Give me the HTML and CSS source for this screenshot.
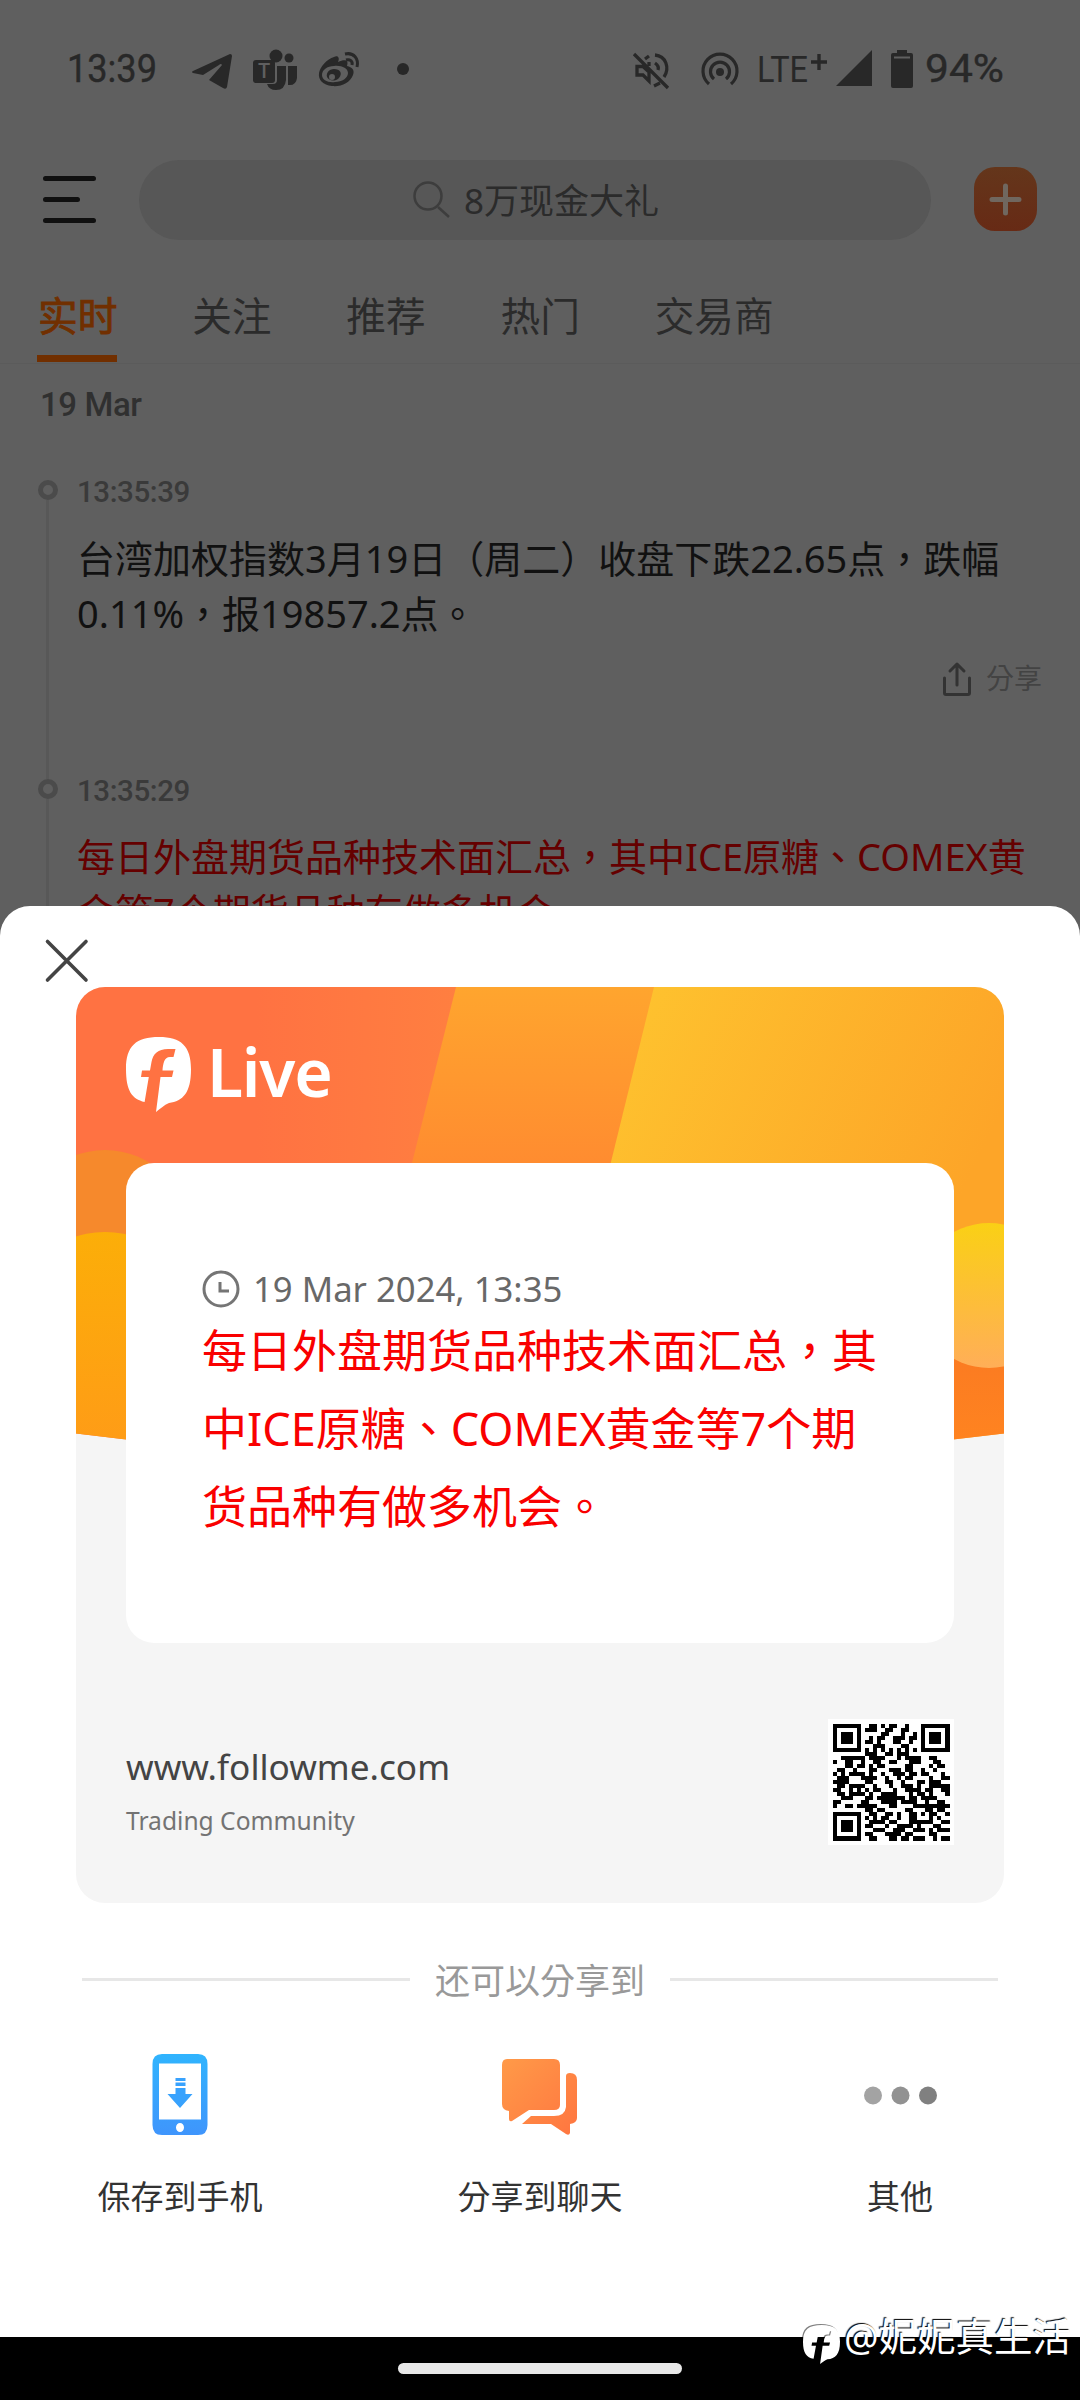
FILE: index.html
```html
<!DOCTYPE html>
<html lang="zh-Hant-TW">
<head>
<meta charset="utf-8">
<title>Followme</title>
<link rel="stylesheet" href="styles.css">
</head>
<body>
<div class="screen">
  <main class="app">
    <div class="status">
      <svg class="st-time" width="92" height="40" viewBox="0 0 92 40"><text x="1" y="34" textLength="90" lengthAdjust="spacingAndGlyphs">13:39</text></svg>
      <svg class="st-tg" width="42" height="40" viewBox="0 0 42 40"><path d="M2 20 39 3Q41 3 41 5L36 36Q35 39 32 37L18 29 31 14Q30 12 28 14L12 24 2 22Q0 21 2 20Z"/></svg>
      <svg class="st-teams" width="44" height="42" viewBox="0 0 44 42"><circle cx="23" cy="7" r="6.500"/><circle cx="36" cy="9" r="4.500"/><path d="M24 17H33V31Q32 41 23 41 16 41 14 35H20Q24 35 24 31ZM35 17H44V29Q43 37 35 36Z"/><rect y="11" width="22" height="23" rx="3"/><text class="st-t" x="11" y="29" text-anchor="middle">T</text></svg>
      <svg class="st-weibo" width="42" height="36" viewBox="0 0 42 36"><path fill-rule="evenodd" d="M16 5C20 3 22 6 20 10 27 7 31 8 29 14 34 15 37 18 35 23 32 31 23 35 14 34 5 33 0 28 1 21 2 15 9 7 16 5ZM16 14C9 14 4 18 4 23 4 28 10 31 17 30 24 30 30 26 30 21 30 16 23 13 16 14Z"/><path fill-rule="evenodd" d="M16 17C11 17 8 21 9 25 11 29 17 30 21 26 25 21 22 17 16 17ZM14 22A3 3 0 1 1 14 28 3 3 0 0 1 14 22Z"/><path class="line" d="M27 2C36 0 41 7 39 15M28 8C32 7 35 9 34 13" stroke-width="3"/></svg>
      <span class="st-dot"></span>
      <svg class="st-mute" width="38" height="38" viewBox="0 0 38 38"><path class="line" d="M2 2 36 36M5 14.500H11L17 20V29L11 23H5ZM23 3C34 4 38 16 32 25M23 11C26 13 27 15 26 18M22 34 28 31M17 4 13 7M17 10V14" stroke-width="3.300"/></svg>
      <svg class="st-spot" width="38" height="34" viewBox="0 0 38 34"><circle cx="19" cy="20" r="4"/><path class="line" d="M8 32A17 17 0 1 1 30 32M13 27A9.500 9.500 0 1 1 25 27" stroke-width="3.200"/></svg>
      <svg class="st-lte" width="70" height="40" viewBox="0 0 70 40"><text x="-2" y="35" textLength="51" lengthAdjust="spacingAndGlyphs">LTE</text><path class="line" d="M52 15H68M60 7V23" stroke-width="3.400"/></svg>
      <svg class="st-sig" width="36" height="36" viewBox="0 0 36 36"><path d="M36 0V36H0Z"/></svg>
      <svg class="st-bat" width="24" height="40" viewBox="0 0 24 40"><path d="M7 1H17V4H21Q23 4 23 6V37Q23 39 21 39H3Q1 39 1 37V6Q1 4 3 4H7Z"/><path class="gap" d="M4 8.500H20"/></svg>
      <svg class="st-pct" width="80" height="40" viewBox="0 0 80 40"><text x="-1" y="34" textLength="79" lengthAdjust="spacingAndGlyphs">94%</text></svg>
    </div>

    <header class="top">
      <svg class="menu" width="53" height="50" viewBox="0 0 53 50"><path d="M2.500 4.500H50.500M2.500 25.500H34.500M2.500 46.500H50.500"/></svg>
      <div class="search">
        <svg width="38" height="38" viewBox="0 0 38 38"><circle cx="15" cy="15" r="13.500"/><path d="M25 26 36 36"/></svg>
        <span>8万现金大礼</span>
      </div>
      <div class="add"><svg width="31" height="31" viewBox="0 0 31 31"><path d="M2 15.500H29M15.500 2V29"/></svg></div>
    </header>

    <nav class="tabs">
      <span class="tab active">实时</span><span class="tab">关注</span><span class="tab">推荐</span><span class="tab">热门</span><span class="tab">交易商</span>
    </nav>

    <div class="date">19 Mar</div>
    <article class="item">
      <time>13:35:39</time>
      <p>台湾加权指数3月19日（周二）收盘下跌22.65点，跌幅<br>0.11%，报19857.2点。</p>
      <div class="share">
        <svg width="30" height="36" viewBox="0 0 30 36"><path d="M2.500 17V32Q2.500 33.500 4 33.500H26Q27.500 33.500 27.500 32V17M15 24V3M8 10 15 3 22 10"/></svg>
        <span>分享</span>
      </div>
    </article>
    <article class="item hot">
      <time>13:35:29</time>
      <p>每日外盘期货品种技术面汇总，其中ICE原糖、COMEX黄<br>金等7个期货品种有做多机会。</p>
    </article>
  </main>

  <section class="sheet">
    <div class="close"><svg width="44" height="44" viewBox="0 0 44 44"><path d="M2.500 2.500 41 41M41 2.500 2.500 41"/></svg></div>
    <div class="card">
      <svg class="banner" width="928" height="460" viewBox="0 0 928 460">
        <defs>
          <clipPath id="arc"><path d="M0 0H928V446.500Q464 505 0 446.500Z"/></clipPath>
          <linearGradient id="gA"><stop offset=".45" stop-color="#ff7242"/><stop offset="1" stop-color="#ff8040"/></linearGradient>
          <linearGradient id="gB" x2="0" y2="1"><stop offset="0" stop-color="#ffa52e"/><stop offset=".38" stop-color="#ff8b30"/><stop offset="1" stop-color="#ff8b30"/></linearGradient>
          <linearGradient id="gC" x2="1" y2=".5"><stop offset="0.1" stop-color="#fec52f"/><stop offset=".9" stop-color="#fda528"/></linearGradient>
          <linearGradient id="gD" x2="0" y2="1"><stop offset="0" stop-color="#fcae08"/><stop offset="1" stop-color="#ff9a18"/></linearGradient>
          <linearGradient id="gE" x2="0" y2="1"><stop offset="0" stop-color="#fad015"/><stop offset="1" stop-color="#ffae58"/></linearGradient>
          <linearGradient id="gF" x2="0" y2="1"><stop offset="0" stop-color="#f97522"/><stop offset="1" stop-color="#ff8420"/></linearGradient>
        </defs>
        <g clip-path="url(#arc)">
          <rect width="400" height="480" fill="url(#gA)"/>
          <path d="M380 0H600V480H260Z" fill="url(#gB)"/>
          <path d="M578 0H928V480H460Z" fill="url(#gC)"/>
          <circle cx="29" cy="248" r="85" fill="#f6892c"/>
          <path d="M-66 340A95 95 0 0 1 124 340V480H-66Z" fill="url(#gD)"/>
          <path d="M840 310H928V460H840Z" fill="url(#gF)"/>
          <circle cx="913" cy="308.500" r="72.500" fill="url(#gE)"/>
        </g>
      </svg>
      <div class="brand">
        <svg width="65" height="75" viewBox="0 0 65 75"><path id="mark" d="M18.600 65C6 62 0 54 0 32 0 9 10 0 33 0 55 0 65 9 65 32 65 56 57 64 43 66 38 68 34 72 30 75L34.500 40H46L47.500 33.600H36.500C37 27 38 20 44 20H47.500L49.500 12H42C32 12 27 17 25.500 25L24 33.600H16L15 40H22.800Z"/></svg>
        <span>Live</span>
      </div>
      <div class="note">
        <div class="when">
          <svg width="38" height="38" viewBox="0 0 38 38"><circle cx="19" cy="19" r="17"/><path d="M18 12V21H27"/></svg>
          <span>19 Mar 2024, 13:35</span>
        </div>
        <p>每日外盘期货品种技术面汇总，其<br>中ICE原糖、COMEX黄金等7个期<br>货品种有做多机会。</p>
      </div>
      <div class="foot">
        <div>
          <div class="url">www.followme.com</div>
          <div class="tag">Trading Community</div>
        </div>
        <svg class="qr" viewBox="0 0 29 29" shape-rendering="crispEdges"></svg>
      </div>
    </div>

    <div class="divider"><span>还可以分享到</span></div>
    <div class="actions">
      <div class="action">
        <div class="icon"><svg width="56" height="82" viewBox="0 0 56 82"><defs><linearGradient id="gP" x2="0" y2="1"><stop offset="0" stop-color="#30b4fe"/><stop offset="1" stop-color="#3f95fc"/></linearGradient></defs><path fill="url(#gP)" fill-rule="evenodd" d="M10 0H46Q55.500 0 55.500 10V71Q55.500 81 46 81H10Q.5 81 .5 71V10Q.5 0 10 0ZM7 9.500V65.500H49V9.500ZM28 69A4 4.500 0 0 0 28 78 4 4.500 0 0 0 28 69Z"/><path fill="#38a2fd" d="M23.500 24H33.500V27H23.500ZM23.500 28.500H33.500V32H23.500ZM23.500 34H33.500V40H40.500L28 54 15.500 40H23.500Z"/></svg></div>
        <span>保存到手机</span>
      </div>
      <div class="action">
        <div class="icon"><svg width="80" height="82" viewBox="0 0 80 82"><defs><linearGradient id="gM" x2="1" y2="1"><stop offset="0" stop-color="#ff9a48"/><stop offset="1" stop-color="#ff7540"/></linearGradient></defs><path fill="url(#gM)" d="M7 5H54Q60 5 60 11V51Q60 56 54 56H29L12 67Q9 68 9 65V57Q2 56 2 50V11Q2 5 7 5ZM66 22Q66 19 70 19 77 19 77 26V64Q77 69 70 70V79Q69 82 66 80L51 70H22L31 62H54Q65 62 66 53Z"/></svg></div>
        <span>分享到聊天</span>
      </div>
      <div class="action">
        <div class="icon"><svg width="74" height="82" viewBox="0 0 74 82"><circle cx="10" cy="41.500" r="9" fill="#a3a3a3"/><circle cx="37.500" cy="41.500" r="9" fill="#929292"/><circle cx="65" cy="41.500" r="9" fill="#808080"/></svg></div>
        <span>其他</span>
      </div>
    </div>
  </section>

  <footer class="navbar"><span></span></footer>

  <div class="watermark">
    <svg width="37" height="39" viewBox="0 0 65 75" preserveAspectRatio="none"><use href="#mark"/></svg>
    <span>@妮妮真生活</span>
  </div>
</div>
<script src="qr.js"></script>
</body>
</html>
```
FILE: styles.css
```css
*, *::before, *::after { box-sizing: border-box; }
body { margin: 0; background: #5f5f5f; font-family: "Noto Sans", "Noto Sans CJK TC", sans-serif; }
p { margin: 0; white-space: nowrap; }
svg { display: block; flex: none; overflow: visible; }
.screen { position: relative; width: 1080px; height: 2400px; display: flex; flex-direction: column; overflow: hidden; }
.app { height: 906px; flex: none; overflow: hidden; }

.status { height: 160px; padding: 48px 0 0 66px; display: flex; align-items: flex-start; fill: #282828; }
.status text { font: 400 39px Roboto, sans-serif; stroke: #282828; stroke-width: .4px; }
.status .line { fill: none; stroke: #282828; }
.status .st-t { font: 500 20px Roboto, sans-serif; fill: #5f5f5f; stroke: none; }
.status .st-lte text { font-size: 37px; stroke: none; }
.st-time { margin-right: 33px; }
.st-tg { margin: 3px 20px 0 0; }
.st-teams { margin: 1px 21px 0 0; }
.st-weibo { margin: 4px 37px 0 0; }
.st-dot { width: 12px; height: 12px; border-radius: 6px; background: #282828; margin: 15px 223px 0 0; }
.st-mute { margin: 4px 31px 0 0; }
.st-spot { margin: 4px 20px 0 0; }
.st-lte { margin: -1px 7px 0 0; }
.st-sig { margin: 2px 18px 0 0; }
.st-bat { margin: 1px 12px 0 0; }
.gap { stroke: #5f5f5f; stroke-width: 2; }

.top { display: flex; align-items: center; height: 80px; padding: 0 43px; }
.menu { stroke: #101010; stroke-width: 5; stroke-linecap: round; margin-top: -3px; }
.search { width: 792px; height: 80px; margin: 0 43px; border-radius: 40px; background: #575757; display: flex; align-items: center; padding-left: 274px; gap: 13px; font-size: 35px; color: #2b2b2b; white-space: nowrap; }
.search span { margin-top: -3px; }
.search svg { fill: none; stroke: #3d3d3d; stroke-width: 2.5; }
.add { width: 63px; height: 64px; margin-top: -2px; flex: none; border-radius: 21px; background: linear-gradient(#64361b, #672a15); display: flex; align-items: center; justify-content: center; }
.add svg { stroke: #70675f; stroke-width: 5; stroke-linecap: round; }

.tabs { display: flex; gap: 74.800px; height: 124px; padding: 28px 0 0 38px; border-bottom: 1px solid #5b5b5b; font-size: 39.700px; line-height: 96px; color: #2b2b2b; }
.tab { position: relative; }
.tab.active { color: #712f00; -webkit-text-stroke: .9px #712f00; }
.tab.active::after { content: ""; position: absolute; left: -1px; right: 0; bottom: 1px; height: 7px; background: #712f00; }

.date { height: 82px; margin-bottom: 29px; padding-left: 40px; font: 500 33px/81px Roboto, sans-serif; color: #303030; letter-spacing: -.4px; }
.item { position: relative; height: 298.500px; padding-left: 77px; }
.item::before { content: ""; position: absolute; left: 38px; top: 5px; width: 20px; height: 20px; border: 5px solid #4b4b4b; border-radius: 50%; }
.item::after { content: ""; position: absolute; left: 46px; top: 25px; width: 3px; bottom: -5px; background: #585858; }
.item time { display: block; height: 55.500px; font: 500 29.500px/34px Roboto, sans-serif; color: #3a3a3a; letter-spacing: -.4px; }
.item p { font-size: 38px; line-height: 55px; color: #111; }
.hot p { color: #650000; }
.share { display: flex; justify-content: flex-end; align-items: center; gap: 14px; height: 36px; margin: 20px 38px 0 0; font-size: 28px; color: #434343; }
.share span { margin-top: -4px; }
.share svg { fill: none; stroke: #333; stroke-width: 3; stroke-linecap: round; stroke-linejoin: round; }

.sheet { height: 1431px; flex: none; background: #fff; border-radius: 30px 30px 0 0; }
.close { height: 81px; padding: 33px 0 0 45px; }
.close svg { stroke: #444; stroke-width: 3.6; stroke-linecap: round; }
.card { position: relative; width: 928px; height: 916px; margin: 0 auto; border-radius: 29px; overflow: hidden; background: #f5f5f5; padding: 50px; }
.banner { position: absolute; left: 0; top: 0; }
.brand { position: relative; height: 126px; display: flex; fill: #fff; color: #fff; }
.brand span { margin-left: 16px; font-size: 66px; font-weight: 600; line-height: 69px; letter-spacing: -1.2px; }
.note { position: relative; height: 480px; padding: 101px 0 0 76px; border-radius: 28px; background: #fff; }
.when { display: flex; align-items: center; height: 50px; gap: 13px; font-size: 34.700px; color: #686868; }
.when span { margin-top: -2px; }
.when svg { fill: none; stroke: #757575; stroke-width: 3; }
.note p { font-size: 45px; line-height: 78px; margin-top: -2px; color: #f90000; }
.foot { display: flex; justify-content: space-between; padding-top: 76px; }
.url { font-size: 35.200px; line-height: 50px; margin-top: 22px; color: #444; }
.tag { font-size: 24.600px; line-height: 40px; margin-top: 10px; color: #737373; }
.qr { width: 126px; height: 126px; padding: 4.500px; background: #fff; }

.divider { display: flex; align-items: center; gap: 25px; height: 48px; margin: 52px 82px 0; font-size: 35px; color: #999; }
.divider::before, .divider::after { content: ""; flex: 1; height: 3px; background: #e7e7e7; }
.divider span { margin-top: -2px; }
.actions { display: flex; margin-top: 51px; }
.action { flex: 1; display: flex; flex-direction: column; align-items: center; font-size: 33px; color: #333; line-height: 48px; }
.icon { height: 119px; }

.navbar { height: 63px; flex: none; background: #000; display: flex; justify-content: center; padding-top: 26px; }
.navbar span { width: 284px; height: 11px; border-radius: 6px; background: #e8e8e8; }

.watermark { position: absolute; right: 9px; top: 2310px; height: 52px; display: flex; align-items: center; gap: 4px; color: #fff; fill: #fff; font-size: 38.500px; line-height: 52px; text-shadow: -1px -1px 1px #000; }
.watermark svg { margin-top: 16px; filter: drop-shadow(-1px -1px .5px rgba(0,0,0,.5)); }
```
FILE: qr.js
```js
const rows = [
  "11111110011010110010001111111",
  "10000010111001100110001000001",
  "10111010000011000100101011101",
  "10111010010110011101101011101",
  "10111010110100011001001011101",
  "10000010001110000110001000001",
  "11111110101010101010101111111",
  "00000000111001101110000000000",
  "00111111011110001011110011000",
  "10011001001100110001110001100",
  "00011011010110000011000010110",
  "01100100011000111011001001000",
  "10101111010010011101101100010",
  "01110001111001001011000010011",
  "11110000110001100100011011100",
  "01101111001000100111010011111",
  "11001010101100010011110110011",
  "01101111010011110001011010001",
  "00111000110111111101101111000",
  "11000001100011110111100100110",
  "10011011111000110000111111111",
  "00000000110110000011000110110",
  "11111110011001101001101011001",
  "10000010101011001001100010100",
  "10111010011110110001111110011",
  "10111010110001001111010001100",
  "10111010001110011100111010111",
  "10000010110001111011000011000",
  "11111110011000110110111001011"
];
const d = rows.map((row, y) => [...row].map((c, x) => c === "1" ? `M${x} ${y}h1v1h-1z` : "").join("")).join("");
document.querySelector(".qr").innerHTML = `<path d="${d}"/>`;
```
